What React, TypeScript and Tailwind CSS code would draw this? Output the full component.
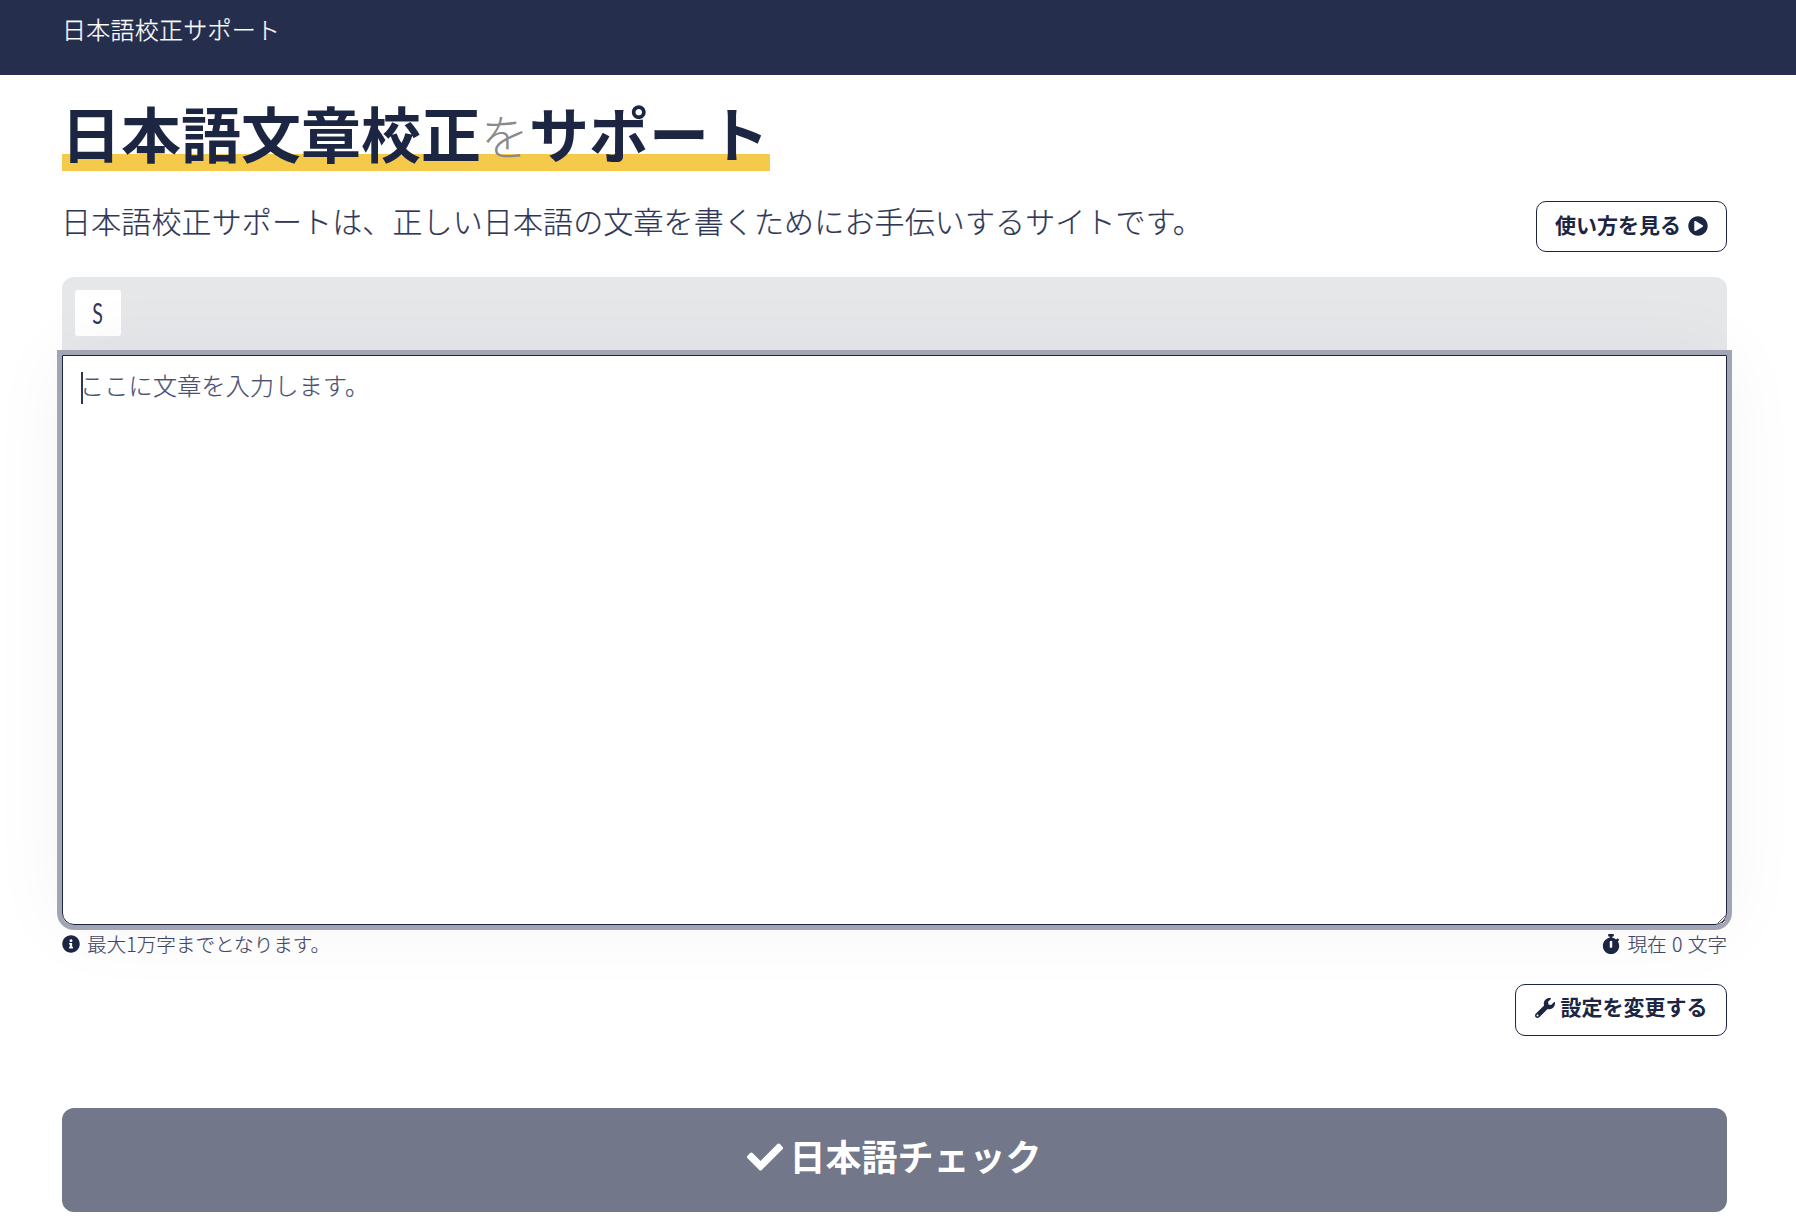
import { FaCheck, FaInfoCircle, FaPlayCircle, FaStopwatch, FaWrench } from 'react-icons/fa'

const font = '[font-family:"Noto_Sans_CJK_JP","Noto_Sans",sans-serif]'

export default function App() {
  return (
    <div className={`min-h-[1223px] bg-white text-[#1c2541] ${font}`}>
      <nav className="h-[75px] bg-[#252e4d] pl-[62px] pt-[11px] text-[24px] leading-[36px] font-light tracking-[0.25px] text-white [-webkit-text-stroke:0.25px]">
        日本語校正サポート
      </nav>

      <main className="pl-[62px] pr-[69px]">
        <h1 className="mt-[21px] flex h-[75px]">
          <span className="flex h-[75px] items-start bg-[linear-gradient(transparent_58px,#f5c94a_58px)] pr-[1px] pt-[6px] text-[60px] leading-[60px] font-bold">
            <span className="-ml-[1px]">日本語文章校正</span>
            <span className="mt-[8px] text-[48px] leading-[48px] font-light text-[#8a8a8a]">を</span>
            <span>サポート</span>
          </span>
        </h1>

        <div className="mt-[27px] flex h-[79px] items-start justify-between">
          <p className="-ml-[1px] text-[30px] leading-[44px] font-light tracking-[0.13px] text-[#2f3656] [-webkit-text-stroke:0.2px]">
            日本語校正サポートは、正しい日本語の文章を書くためにお手伝いするサイトです。
          </p>
          <button className="mt-[3px] flex h-[51px] w-[191px] items-center justify-center gap-[7px] rounded-[10px] border border-[#1c2541] pb-[4px] text-[21px] font-bold">
            使い方を見る
            <FaPlayCircle className="mt-[2px] text-[20px]" />
          </button>
        </div>

        <div className="h-[73px] rounded-t-xl bg-[#e5e7e9] px-[13px] pt-[13px]">
          <button className="flex h-[46px] w-[46px] items-center justify-center rounded-[3px] bg-white font-['Lato',sans-serif] text-[28px] font-normal text-[#2f3656]">
            <span className="scale-x-[0.7]">S</span>
          </button>
        </div>
        <div className="relative mt-[5px]">
          <textarea
            className="block h-[570px] w-full rounded-b-xl border border-[#1c2541] pl-[17px] pr-[19px] pt-[11px] text-[24px] leading-[36px] font-light tracking-[0.3px] text-[#2f3656] shadow-[0_0_0_5px_#a2a6b4,0_0_80px_rgba(30,39,69,0.05)] outline-none [-webkit-text-stroke:0.2px] placeholder:text-[#4a5072]"
            placeholder="ここに文章を入力します。"
          />
          <span className="absolute left-[19px] top-[17px] h-[32px] w-[2px] bg-[#2f3656]" />
        </div>

        <div className="relative mt-[4px] flex h-[30px] justify-between text-[19.6px] leading-[30px] font-light text-[#3f4564] [-webkit-text-stroke:0.15px]">
          <span className="flex items-center gap-[7px]">
            <FaInfoCircle className="text-[18px] text-[#1c2541]" />
            最大1万字までとなります。
          </span>
          <span className="flex items-center gap-[6px] [word-spacing:1px]">
            <FaStopwatch className="text-[20px] text-[#1c2541]" />
            現在 0 文字
          </span>
        </div>

        <div className="mt-[25px] flex justify-end">
          <button className="flex h-[52px] w-[212px] items-center justify-center gap-[6px] rounded-[10px] border border-[#1c2541] pb-[6px] text-[21px] font-bold">
            <FaWrench className="mt-[2px] text-[20px]" />
            設定を変更する
          </button>
        </div>

        <button className="mt-[72px] flex h-[104px] w-full items-center justify-center gap-[6px] rounded-xl bg-[#727789] pb-[11px] text-[36px] font-bold text-white">
          <FaCheck className="mt-[4px] text-[36px]" />
          日本語チェック
        </button>
      </main>
    </div>
  )
}
